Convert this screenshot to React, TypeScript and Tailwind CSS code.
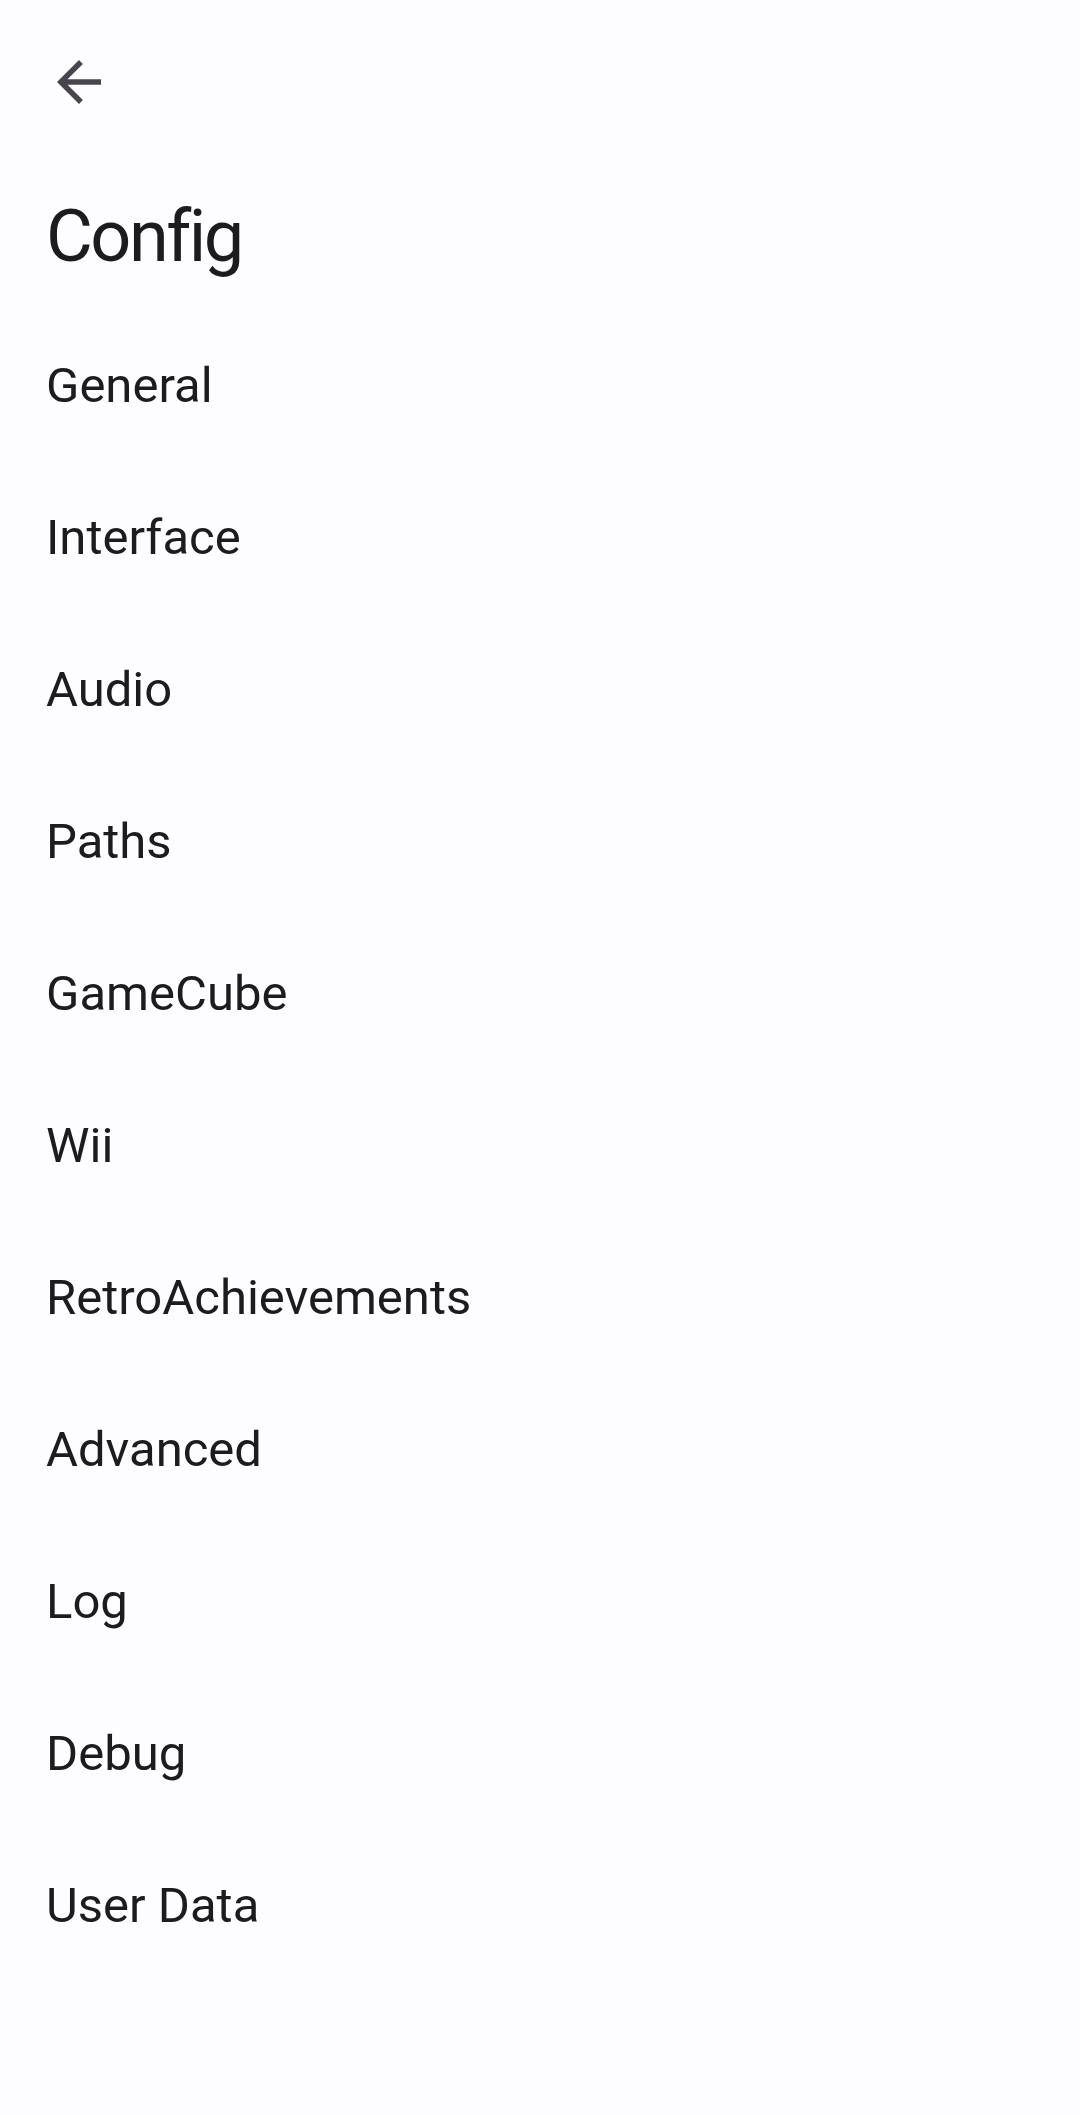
const sections = [
  "General",
  "Interface",
  "Audio",
  "Paths",
  "GameCube",
  "Wii",
  "RetroAchievements",
  "Advanced",
  "Log",
  "Debug",
  "User Data",
];

function BackArrow() {
  return (
    <svg viewBox="0 0 24 24" className="w-[66px] h-[66px]" fill="#49454f">
      <path d="M20 11H7.83l5.59-5.59L12 4l-8 8 8 8 1.41-1.41L7.83 13H20v-2z" />
    </svg>
  );
}

export default function App() {
  return (
    <main className="w-full min-h-[2115px] bg-[#fdfcff] text-[#1c1b1f] font-['Roboto','Liberation_Sans',sans-serif]">
      <header className="h-[163px] flex items-center pl-[46px]">
        <button className="flex items-center justify-center">
          <BackArrow />
        </button>
      </header>
      <h1 className="h-[147px] leading-[147px] text-[72px] tracking-[-2.5px] font-normal pl-[46px]">
        Config
      </h1>
      <ul className="flex flex-col">
        {sections.map((s) => (
          <li key={s} className="h-[152px] leading-[152px] text-[49px] pl-[46px]">
            {s}
          </li>
        ))}
      </ul>
    </main>
  );
}
